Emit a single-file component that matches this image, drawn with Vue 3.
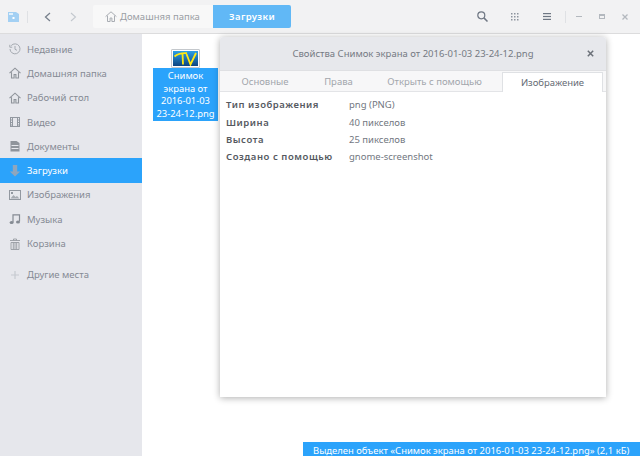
<script setup>
const places = [
  { label: 'Недавние', icon: 'clock' },
  { label: 'Домашняя папка', icon: 'home' },
  { label: 'Рабочий стол', icon: 'home' },
  { label: 'Видео', icon: 'film' },
  { label: 'Документы', icon: 'doc' },
  { label: 'Загрузки', icon: 'down', active: true },
  { label: 'Изображения', icon: 'image' },
  { label: 'Музыка', icon: 'music' },
  { label: 'Корзина', icon: 'trash' }
]

const tabs = [
  { label: 'Основные', width: 90 },
  { label: 'Права', width: 57 },
  { label: 'Открыть с помощью', width: 135 },
  { label: 'Изображение', width: 101, active: true }
]

const props = [
  ['Тип изображения', 'png (PNG)'],
  ['Ширина', '40 пикселов'],
  ['Высота', '25 пикселов'],
  ['Создано с помощью', 'gnome-screenshot']
]
</script>

<template>
  <div class="window">
    <header class="toolbar">
      <svg class="app-icon" width="11" height="10" viewBox="0 0 11 10">
        <path d="M0 0h8l3 2v8H0z" fill="#a3d0f3" />
        <rect x="1" y="1" width="4" height="2" fill="#e0f0fc" />
        <rect x="4.500" y="5" width="2" height="2" fill="#fff" />
      </svg>
      <span class="tool-sep"></span>
      <svg class="nav back" width="7" height="10" viewBox="0 0 7 10">
        <path d="M6 1L1.500 5 6 9" fill="none" stroke="#77808c" stroke-width="1.300" />
      </svg>
      <svg class="nav forward" width="7" height="10" viewBox="0 0 7 10">
        <path d="M1 1l4.500 4L1 9" fill="none" stroke="#c3c8ce" stroke-width="1.100" />
      </svg>
      <nav class="crumbs">
        <span class="crumb">
          <svg width="12" height="11" viewBox="0 0 12 11">
            <path d="M.6 5.600L6 .8l5.400 4.800M2.500 4.600V10.500h2.600V7h1.800v3.500h2.600V4.600" fill="none" stroke="#a9adb3" stroke-width="1" />
          </svg>
          Домашняя папка
        </span>
        <span class="crumb current">Загрузки</span>
      </nav>
      <div class="tool-right">
        <svg class="search" width="11" height="11" viewBox="0 0 11 11">
          <circle cx="4.300" cy="4.300" r="3.500" fill="none" stroke="#6f7783" stroke-width="1.200" />
          <path d="M6.900 6.900l3.600 3.600" stroke="#6f7783" stroke-width="1.500" />
        </svg>
        <svg class="grid" width="8" height="8" viewBox="0 0 8 8" fill="#8d949e">
          <rect v-for="n in 9" :key="n" :x="((n - 1) % 3) * 3" :y="Math.floor((n - 1) / 3) * 3" width="1.500" height="1.500" />
        </svg>
        <svg class="menu" width="8" height="7" viewBox="0 0 8 7" fill="#6f7783">
          <rect width="8" height="1.200" />
          <rect y="2.900" width="8" height="1.200" />
          <rect y="5.800" width="8" height="1.200" />
        </svg>
        <span class="tool-sep right"></span>
        <span class="win-min"></span>
        <span class="win-max"></span>
        <svg class="win-close" width="6" height="6" viewBox="0 0 6 6">
          <path d="M.5.500l5 5M5.500.500l-5 5" stroke="#b3b8be" stroke-width="1.300" />
        </svg>
      </div>
    </header>

    <div class="body">
      <aside class="sidebar">
        <div v-for="place in places" :key="place.label" :class="['place', { active: place.active }]">
          <svg class="place-icon" width="12" height="12" viewBox="0 0 12 12">
            <g v-if="place.icon === 'clock'" fill="none" stroke="#a5aab1">
              <path d="M2.200 2.600A5 5 0 1 1 1 6" />
              <path d="M6 3v3.300l2 1" />
              <path d="M.8 1.800v2.400h2.400" />
            </g>
            <path v-else-if="place.icon === 'home'" d="M.5 6.200L6 1.200l5.500 5M2.500 5.200V11h2.600V7.500h1.800V11h2.600V5.200" fill="none" stroke="#8f949b" stroke-width="1.100" />
            <g v-else-if="place.icon === 'film'" fill="none" stroke="#9298a0">
              <rect x="1.500" y="1.500" width="9" height="9" />
              <path d="M3.500 1.500v9M8.500 1.500v9M1.500 4h2M1.500 6.500h2M1.500 9h2M8.500 4h2M8.500 6.500h2M8.500 9h2" />
            </g>
            <g v-else-if="place.icon === 'doc'">
              <path d="M1.500 1h6l3 2v8.500h-9z" fill="#8f949b" />
              <rect x="2.500" y="5" width="7" height="1" fill="#e6e7ec" />
              <rect x="2.500" y="8" width="7" height="1" fill="#e6e7ec" />
            </g>
            <path v-else-if="place.icon === 'down'" d="M3.800 0h4.400v6.500h3L6 11.500.8 6.500h3z" fill="#8fa6bd" />
            <g v-else-if="place.icon === 'image'">
              <rect x=".5" y="1.500" width="11" height="9" fill="none" stroke="#9298a0" />
              <path d="M1.500 9.500l3-3.500 2 2 1.500-1 2.500 2.500z" fill="#a5aab1" />
              <rect x="2" y="3" width="2" height="2" fill="#9298a0" />
            </g>
            <g v-else-if="place.icon === 'music'">
              <path d="M4 9V1.800h6.500V8.500" fill="none" stroke="#858b93" stroke-width="1.200" />
              <ellipse cx="2.600" cy="9.600" rx="2" ry="1.500" fill="#858b93" />
              <ellipse cx="9" cy="9.100" rx="2" ry="1.500" fill="#858b93" />
            </g>
            <g v-else fill="none" stroke="#979ca3" stroke-width=".9">
              <path d="M1 2.500h10M4.500 2.500V1h3v1.500" />
              <path d="M2 4.500h8v7H2zM4.300 4.500v7M6 4.500v7M7.700 4.500v7" />
            </g>
          </svg>
          <span>{{ place.label }}</span>
        </div>
        <div class="place other">
          <svg class="place-icon" width="12" height="12" viewBox="0 0 12 12">
            <path d="M6 2v8M2 6h8" stroke="#c6cad0" stroke-width="1.200" />
          </svg>
          <span>Другие места</span>
        </div>
      </aside>

      <main class="files">
        <div class="file">
          <div class="thumb">
            <svg width="25" height="15" viewBox="0 0 25 15">
              <defs>
                <linearGradient id="tv" x1="0" y1="0" x2="0" y2="1">
                  <stop offset="0" stop-color="#2c9fe6" />
                  <stop offset="1" stop-color="#0c4480" />
                </linearGradient>
              </defs>
              <rect width="25" height="15" fill="url(#tv)" />
              <path d="M1.500 5.500C5 2.500 9 1.800 14 2.200M9.500 2.500L10 13.500" fill="none" stroke="#ffe812" stroke-width="1.800" />
              <path d="M13.500 3l4 10.500L23 2" fill="none" stroke="#ffe812" stroke-width="1.800" />
            </svg>
          </div>
          <div class="file-name">Снимок<br />экрана от<br />2016-01-03<br />23-24-12.png</div>
        </div>
      </main>
    </div>

    <section class="dialog">
      <div class="dialog-head">
        <span class="dialog-title">Свойства Снимок экрана от 2016-01-03 23-24-12.png</span>
        <svg class="dialog-close" width="7" height="7" viewBox="0 0 7 7">
          <path d="M.8.8l5.400 5.400M6.200.8L.8 6.200" stroke="#6b7078" stroke-width="1.500" />
        </svg>
      </div>
      <div class="tabs">
        <span
          v-for="tab in tabs"
          :key="tab.label"
          :class="['tab', { active: tab.active }]"
          :style="{ width: tab.width + 'px' }"
        >{{ tab.label }}</span>
      </div>
      <dl class="props">
        <template v-for="row in props" :key="row[0]">
          <dt>{{ row[0] }}</dt>
          <dd>{{ row[1] }}</dd>
        </template>
      </dl>
    </section>

    <div class="status">Выделен объект «Снимок экрана от 2016-01-03 23-24-12.png» (2,1 кБ)</div>
  </div>
</template>

<style>
html, body {
  margin: 0;
  background: #fff;
}
</style>

<style scoped>
.window {
  position: relative;
  width: 640px;
  height: 456px;
  overflow: hidden;
  display: flex;
  flex-direction: column;
  font-family: "Noto Sans", "Open Sans", sans-serif;
  font-size: 9.5px;
  color: #666c75;
  background: #fff;
}

.toolbar {
  flex: none;
  height: 33px;
  display: flex;
  align-items: center;
  background: #f2f2f3;
  border-bottom: 1px solid #dcdcdd;
}

.app-icon {
  margin-left: 8px;
}

.tool-sep {
  width: 1px;
  height: 12px;
  margin-left: 8px;
  background: #dfe1e4;
}

.nav.back {
  margin-left: 16px;
}

.nav.forward {
  margin-left: 19px;
}

.crumbs {
  display: flex;
  margin-left: 16px;
  height: 23px;
}

.crumb {
  width: 120px;
  padding-left: 12px;
  box-sizing: border-box;
  display: flex;
  align-items: center;
  gap: 3px;
  background: #f8f8f8;
  color: #9a9ea4;
  border-radius: 2px 0 0 2px;
}

.crumb.current {
  width: 78px;
  padding-left: 16px;
  background: #61b8f6;
  color: #fff;
  font-weight: 600;
  letter-spacing: 0.4px;
  border-radius: 0 2px 2px 0;
}

.tool-right {
  margin-left: auto;
  display: flex;
  align-items: center;
}

.search {
  margin-right: 23px;
}

.grid {
  margin-right: 24px;
}

.menu {
  margin-right: 14px;
}

.tool-sep.right {
  margin-left: 0;
  margin-right: 10px;
}

.win-min {
  width: 6px;
  height: 1px;
  background: #b3b8be;
  margin-right: 17px;
}

.win-max {
  width: 4px;
  height: 2px;
  border: 1px solid #b3b8be;
  border-top-width: 2px;
  margin-right: 17px;
}

.win-close {
  margin-right: 12px;
}

.body {
  flex: 1;
  display: flex;
  min-height: 0;
}

.sidebar {
  flex: none;
  width: 142px;
  padding-top: 3px;
  background: #e6e7ec;
}

.place {
  height: 24.3px;
  display: flex;
  align-items: center;
  padding-left: 9px;
  color: #858a94;
  font-size: 9.5px;
}

.place span {
  margin-left: 6px;
}

.place.active {
  background: #2ba3fb;
  color: #fff;
}

.place.other {
  margin-top: 7px;
}

.place-icon {
  flex: none;
}

.files {
  flex: 1;
  position: relative;
  padding: 15px 0 0 11px;
}

.file {
  width: 65px;
  display: flex;
  flex-direction: column;
  align-items: center;
}

.thumb {
  display: flex;
  padding: 1px;
  border: 1px solid #c4c8cc;
  border-radius: 1px;
  background: #fff;
}

.file-name {
  width: 65px;
  height: 53px;
  padding-top: 2px;
  box-sizing: border-box;
  background: #2ba3fb;
  color: #fff;
  text-align: center;
  font-size: 9.4px;
  line-height: 12.7px;
  white-space: nowrap;
}

.dialog {
  position: absolute;
  left: 220px;
  top: 37px;
  width: 386px;
  height: 360px;
  background: #fff;
  border-radius: 3px 3px 0 0;
  box-shadow: 0 1px 7px rgba(0, 0, 0, 0.32);
}

.dialog-head {
  height: 33px;
  display: flex;
  align-items: center;
  justify-content: center;
  position: relative;
  background: #e7e8ec;
  border-radius: 3px 3px 0 0;
  border-bottom: 1px solid #dfe0e3;
  color: #757a83;
  font-size: 9.5px;
}

.dialog-close {
  position: absolute;
  right: 12px;
  top: 13px;
}

.tabs {
  height: 20px;
  display: flex;
  align-items: flex-end;
  border-bottom: 1px solid #e3e4e7;
  background: #f7f7f8;
}

.tab {
  height: 20px;
  display: flex;
  align-items: center;
  justify-content: center;
  box-sizing: border-box;
  color: #a2a6ac;
  font-size: 9.5px;
}

.tab.active {
  height: 20px;
  margin-bottom: -1px;
  background: #fff;
  color: #666c75;
  border: 1px solid #dfe1e4;
  border-bottom: 0;
}

.props {
  margin: 0;
  padding: 4px 0 0 6px;
  display: grid;
  grid-template-columns: 123px 1fr;
  grid-auto-rows: 17.4px;
  align-items: center;
  font-size: 9.5px;
}

.props dt {
  font-weight: 600;
  color: #55595f;
  letter-spacing: 0.55px;
  white-space: nowrap;
}

.props dd {
  margin: 0;
  color: #72777f;
}

.status {
  position: absolute;
  left: 303px;
  bottom: 0;
  width: 337px;
  height: 14px;
  box-sizing: border-box;
  padding-left: 10px;
  background: #2ba3fb;
  color: #fff;
  font-size: 9.45px;
  line-height: 17px;
  white-space: nowrap;
  overflow: hidden;
}
</style>
